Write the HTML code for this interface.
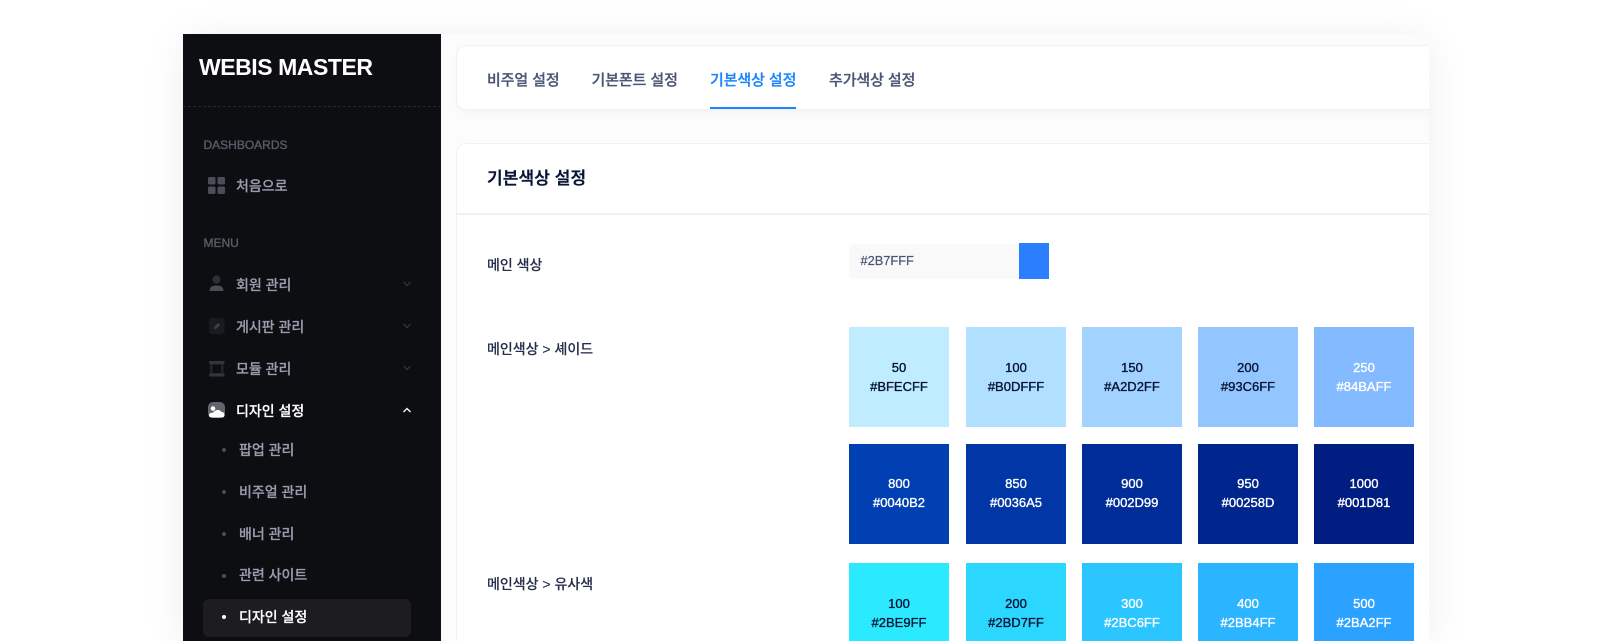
<!DOCTYPE html>
<html lang="ko"><head><meta charset="utf-8"><title>WEBIS MASTER</title>
<style>
html,body{margin:0;padding:0;background:#fff;width:1600px;height:641px;overflow:hidden}
body{font-family:"Liberation Sans","Noto Sans CJK KR",sans-serif;position:relative}
.t{position:absolute;line-height:20px;white-space:nowrap}
#wrap{position:absolute;left:183px;top:34px;width:1246px;height:607px;box-shadow:0 5px 40px rgba(0,0,0,.07);background:#fcfcfc;overflow:hidden}
#side{position:absolute;left:183px;top:34px;width:258px;height:607px;background:#0d0e12}
#clip{position:absolute;left:441px;top:34px;width:988px;height:607px;overflow:hidden}
.card{position:absolute;left:15px;width:1100px;background:#fff;border:1px solid #f1f1f4;border-radius:10px;box-sizing:border-box;box-shadow:3px 4px 12px rgba(0,0,0,.03)}
.m{font-size:14px;font-weight:500;color:#9a9cae;-webkit-text-stroke:.2px currentColor}
.h{font-size:12px;font-weight:500;color:#5a5d68;left:203.5px;-webkit-text-stroke:.35px currentColor}
.tab{font-size:15px;font-weight:500;color:#4b5675;-webkit-text-stroke:.25px currentColor;letter-spacing:-.1px}
.lab{font-size:14px;font-weight:500;color:#252f4a;left:487px;-webkit-text-stroke:.12px currentColor}
.sw{position:absolute;width:100px;height:100px;font-size:13px;text-align:center;line-height:19.4px;-webkit-text-stroke:.35px currentColor;box-sizing:border-box;padding-top:31px;color:#fff;overflow:hidden}
.r2{padding-top:30px}
.r3{height:78px}
.k{color:#071437}
.b{position:absolute;width:4px;height:4px;border-radius:50%;background:#4b4d58;left:222px}
</style></head><body>
<div id="wrap"></div>
<div id="clip">
  <div class="card" style="top:11px;height:65px"></div>
  <div class="card" style="top:109px;height:498px;border-bottom:0;border-radius:10px 10px 0 0;box-shadow:none"></div>
  <div style="position:absolute;left:15px;top:179px;width:1100px;height:2px;background:#f1f1f4"></div>
</div>
<div id="side"></div>
<div style="position:absolute;left:183px;top:106px;width:258px;border-top:1px dashed #25262c"></div>

<div class="t" style="left:199px;top:57px;font-size:23px;font-weight:700;color:#fff;letter-spacing:-.45px">WEBIS MASTER</div>
<div class="t h" style="top:135px">DASHBOARDS</div>
<div class="t h" style="top:233px">MENU</div>

<svg style="position:absolute;left:208px;top:177px" width="17" height="17"><g fill="#4b4d58"><rect width="7.5" height="7.5" rx="1.5"/><rect x="9.5" width="7.5" height="7.5" rx="1.5"/><rect y="9.5" width="7.5" height="7.5" rx="1.5"/><rect x="9.5" y="9.5" width="7.5" height="7.5" rx="1.5"/></g></svg>
<div class="t m" style="left:236px;top:176px">처음으로</div>

<svg style="position:absolute;left:209px;top:275px" width="16" height="17"><circle cx="7.500" cy="4.500" r="4" fill="#2f3037"/><path d="M.5 16c0-4 2.500-5.500 7-5.500s7 1.500 7 5.500z" fill="#4a4c55"/></svg>
<div class="t m" style="left:236px;top:275px">회원 관리</div>

<svg style="position:absolute;left:209px;top:318px" width="16" height="16"><rect width="15.500" height="16" rx="3" fill="#1a1b20"/><path d="M5 11.500l.7-3 3.500-3.500 2 2-3.500 3.500z" fill="#3f4149"/></svg>
<div class="t m" style="left:236px;top:317px">게시판 관리</div>

<svg style="position:absolute;left:209px;top:361px" width="16" height="16"><rect x="1" width="13.500" height="15.500" rx="2" fill="#222328"/><rect x="0" y="0" width="15.500" height="3" rx="1" fill="#34353c"/><rect x="0" y="12.500" width="15.500" height="3" rx="1" fill="#34353c"/><rect x="3.500" y="3.500" width="8.500" height="8.500" fill="#0d0e12"/></svg>
<div class="t m" style="left:236px;top:359px">모듈 관리</div>

<svg style="position:absolute;left:208px;top:402px" width="17" height="16"><rect width="17" height="16" rx="5" fill="#62646c"/><circle cx="5" cy="6.500" r="2.300" fill="#fff"/><path d="M1 13.500c0-2.300 2-3.200 4-2.500 1-3 6.500-4.500 8.500-1 2 0 3 1.300 3 3 0 1.500-1 2.500-2.500 2.500h-10C2 15.500 1 14.800 1 13.500z" fill="#fff"/></svg>
<div class="t m" style="left:236px;top:401px;color:#fff">디자인 설정</div>

<svg style="position:absolute;left:403px;top:281px" width="8" height="6"><path d="M.5 1l3.500 3.500L7.500 1" fill="none" stroke="#3a3c44" stroke-width="1"/></svg>
<svg style="position:absolute;left:403px;top:323px" width="8" height="6"><path d="M.5 1l3.500 3.500L7.500 1" fill="none" stroke="#3a3c44" stroke-width="1"/></svg>
<svg style="position:absolute;left:403px;top:365px" width="8" height="6"><path d="M.5 1l3.500 3.500L7.500 1" fill="none" stroke="#3a3c44" stroke-width="1"/></svg>
<svg style="position:absolute;left:403px;top:407px" width="8" height="6"><path d="M.5 5l3.500-3.500L7.500 5" fill="none" stroke="#fff" stroke-width="1.300"/></svg>

<i class="b" style="top:448px"></i><div class="t m" style="left:239px;top:440px">팝업 관리</div>
<i class="b" style="top:490px"></i><div class="t m" style="left:239px;top:482px">비주얼 관리</div>
<i class="b" style="top:532px"></i><div class="t m" style="left:239px;top:524px">배너 관리</div>
<i class="b" style="top:574px"></i><div class="t m" style="left:239px;top:565px">관련 사이트</div>
<div style="position:absolute;left:203px;top:599px;width:208px;height:38px;border-radius:6px;background:#1c1c21"></div>
<i class="b" style="top:615px;background:#fff"></i><div class="t m" style="left:239px;top:607px;color:#fff">디자인 설정</div>

<div class="t tab" style="left:487px;top:71px">비주얼 설정</div>
<div class="t tab" style="left:591.500px;top:71px">기본폰트 설정</div>
<div class="t tab" style="left:710px;top:71px;color:#1b84ff">기본색상 설정</div>
<div class="t tab" style="left:829px;top:71px">추가색상 설정</div>
<div style="position:absolute;left:710px;top:107px;width:86px;height:2px;background:#1b84ff"></div>

<div class="t" style="left:487px;top:169px;font-size:17px;font-weight:500;color:#071437;-webkit-text-stroke:.4px currentColor;letter-spacing:.1px">기본색상 설정</div>
<div class="t lab" style="top:255px">메인 색상</div>
<div class="t lab" style="top:339px">메인색상 &gt; 셰이드</div>
<div class="t lab" style="top:574px">메인색상 &gt; 유사색</div>

<div style="position:absolute;left:849px;top:244px;width:170px;height:35px;background:#f9f9f9;border-radius:6px 0 0 6px"></div>
<div class="t" style="left:860.500px;top:251px;font-size:12.800px;color:#4b5675;-webkit-text-stroke:.2px currentColor">#2B7FFF</div>
<div style="position:absolute;left:1019px;top:243px;width:30px;height:36px;background:#2b7fff"></div>

<div class="sw k" style="left:849px;top:327px;background:#BFECFF">50<br>#BFECFF</div>
<div class="sw k" style="left:966px;top:327px;background:#B0DFFF">100<br>#B0DFFF</div>
<div class="sw k" style="left:1082px;top:327px;background:#A2D2FF">150<br>#A2D2FF</div>
<div class="sw k" style="left:1198px;top:327px;background:#93C6FF">200<br>#93C6FF</div>
<div class="sw" style="left:1314px;top:327px;background:#84BAFF">250<br>#84BAFF</div>

<div class="sw r2" style="left:849px;top:444px;background:#0040B2">800<br>#0040B2</div>
<div class="sw r2" style="left:966px;top:444px;background:#0036A5">850<br>#0036A5</div>
<div class="sw r2" style="left:1082px;top:444px;background:#002D99">900<br>#002D99</div>
<div class="sw r2" style="left:1198px;top:444px;background:#00258D">950<br>#00258D</div>
<div class="sw r2" style="left:1314px;top:444px;background:#001D81">1000<br>#001D81</div>

<div class="sw r3 k" style="left:849px;top:563px;background:#2BE9FF">100<br>#2BE9FF</div>
<div class="sw r3 k" style="left:966px;top:563px;background:#2BD7FF">200<br>#2BD7FF</div>
<div class="sw r3" style="left:1082px;top:563px;background:#2BC6FF">300<br>#2BC6FF</div>
<div class="sw r3" style="left:1198px;top:563px;background:#2BB4FF">400<br>#2BB4FF</div>
<div class="sw r3" style="left:1314px;top:563px;background:#2BA2FF">500<br>#2BA2FF</div>
</body></html>
